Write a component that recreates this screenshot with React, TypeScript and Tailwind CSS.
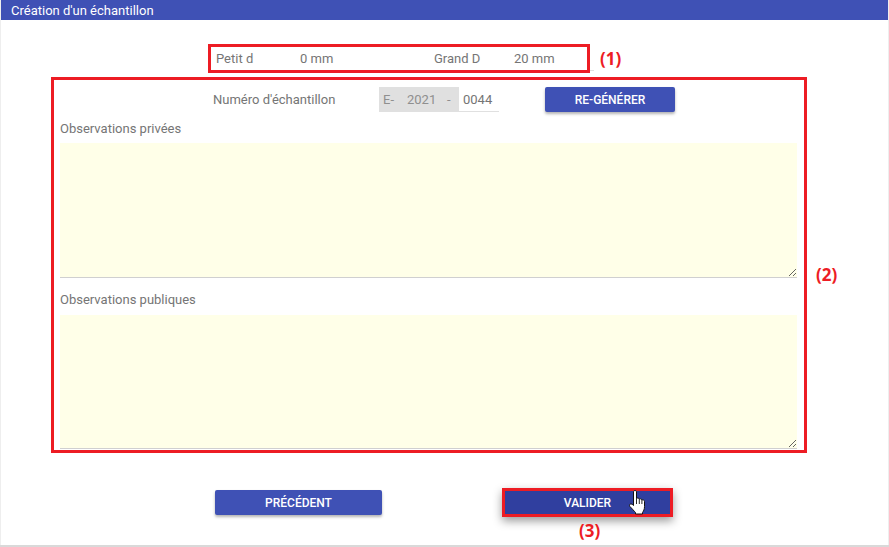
import React from 'react';

const RED = 'border-[3px] border-[#ed1c24]';
const NOTE = "absolute text-[17px] leading-[21px] font-bold text-[#ed1c24] font-['Open_Sans',sans-serif]";

const HandCursor: React.FC = () => (
  <svg width="18" height="25" viewBox="0 0 18 25" className="absolute left-[127px] top-[2px]">
    <path
      d="M4.500 2c0-2 3-2 3 0v6.500c1-.8 2.500-.5 2.800.7.900-.7 2.300-.4 2.600.8 1-.5 2.600 0 2.600 1.500v5c0 3-1 4.500-2 6V24H6.500v-1.500C5 21 3 18.500.9 16.500c-.8-1-.4-2.300.6-2.500 1-.2 2 .4 3 1.500V2z"
      fill="#fff"
      stroke="#111"
      strokeWidth="1"
      strokeLinejoin="round"
    />
    <path d="M7.500 8.500V14M10.300 9.200V14M12.900 10v4" stroke="#111" strokeWidth="0.9" fill="none" />
  </svg>
);

const ObsField: React.FC<{ label: string; area: string; mt: string }> = ({ label, area, mt }) => (
  <div className={mt}>
    <label className="block h-[19px] text-[13px] leading-[19px] text-[#757575]">{label}</label>
    <textarea
      className={`block w-[737px] ${area} bg-[#ffffe8] border-b border-[#d0d0d0] outline-none resize`}
    />
  </div>
);

const App: React.FC = () => {
  return (
    <div className="relative w-[889px] h-[547px] bg-white font-['Roboto',sans-serif] overflow-hidden">
      <div className="h-[545px] border-l border-r border-[#eeeeee]">
        <div className="h-[20px] bg-[#3f51b5] pl-[10px] text-[13px] leading-[21px] text-white">
          Création d'un échantillon
        </div>

        {/* dimensions */}
        <div className="relative mt-[24px] ml-[207px] w-[382px] h-[29px]">
          <div className={`flex items-center h-full ${RED} text-[13px] text-[#757575]`}>
            <span className="ml-[5px] w-[84px]">Petit d</span>
            <span className="w-[134px]">0 mm</span>
            <span className="w-[80px]">Grand D</span>
            <span>20 mm</span>
          </div>
          <div className="absolute left-[382px] top-[26px] w-[4px] h-px bg-[#e0e0e0]" />
          <span className={`${NOTE} left-[392px] top-[4px]`}>(1)</span>
        </div>

        {/* sample form */}
        <div className="relative mt-[4px] ml-[50px] w-[756px] h-[376px]">
          <div className={`h-full ${RED} pl-[6px] pt-[7px]`}>
            <div className="flex items-center h-[25px]">
              <span className="ml-[153px] w-[166px] text-[13px] text-[#757575]">Numéro d'échantillon</span>
              <div className="flex items-center w-[80px] h-full bg-[#e0e0e0] pl-[4px] text-[13px] text-[#8f8f8f]">
                <span className="w-[24px]">E-</span>
                <span className="w-[40px]">2021</span>
                <span>-</span>
              </div>
              <div className="w-[40px] h-full border-b border-[#e0e0e0] pl-[4px] text-[13px] leading-[25px] text-[#757575]">
                0044
              </div>
              <button className="ml-[46px] w-[130px] h-full rounded-[2px] bg-[#3f51b5] text-[12px] font-medium text-white shadow-[0_2px_3px_rgba(0,0,0,0.3)]">
                RE-GÉNÉRER
              </button>
            </div>
            <ObsField label="Observations privées" area="mt-[5px] h-[135px]" mt="mt-[7px]" />
            <ObsField label="Observations publiques" area="mt-[6px] h-[134px]" mt="mt-[12px]" />
          </div>
          <span className={`${NOTE} left-[765px] top-[187px]`}>(2)</span>
        </div>

        {/* actions */}
        <div className="flex items-center mt-[35px] ml-[214px]">
          <button className="w-[167px] h-[25px] rounded-[2px] bg-[#3f51b5] text-[12px] font-medium text-white shadow-[0_2px_3px_rgba(0,0,0,0.3)]">
            PRÉCÉDENT
          </button>
          <div className="relative ml-[120px]">
            <button className={`block w-[171px] h-[29px] ${RED} bg-[#303f9f] text-[12px] font-medium text-white shadow-[0_4px_10px_rgba(0,0,0,0.4)]`}>
              VALIDER
            </button>
            <HandCursor />
            <span className={`${NOTE} left-[77px] top-[32px]`}>(3)</span>
          </div>
        </div>
      </div>
      <div className="h-[2px] bg-[#d9d9d9]" />
    </div>
  );
};

export default App;
